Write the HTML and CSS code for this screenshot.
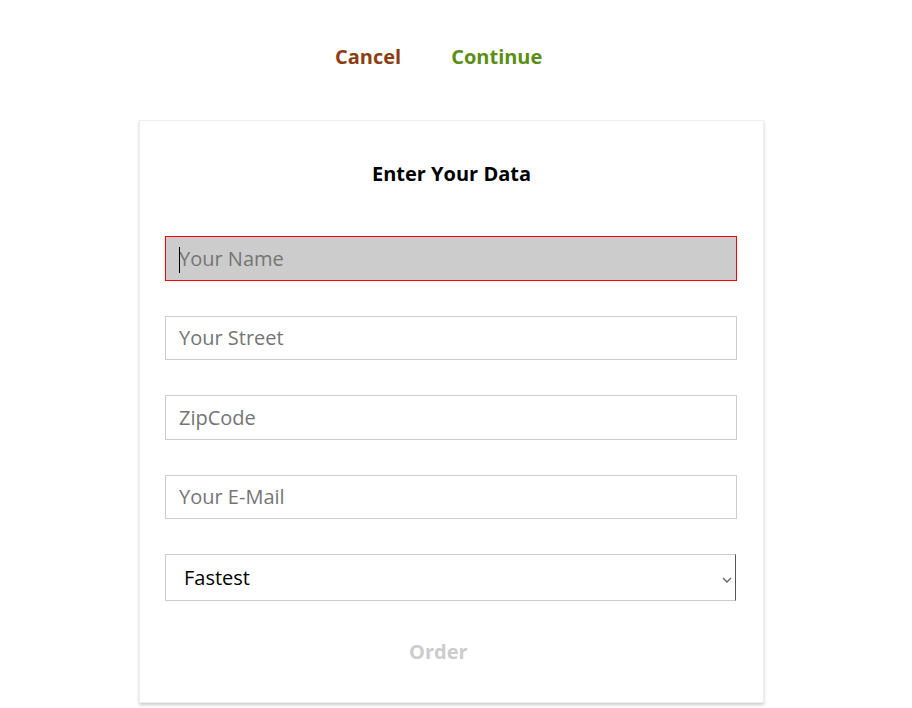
FILE: index.html
```html
<!DOCTYPE html>
<html>
<head>
<meta charset="utf-8">
<link rel="stylesheet" href="styles.css">
</head>
<body>
<div class="page">
  <div class="actions">
    <a class="cancel">Cancel</a>
    <a class="continue">Continue</a>
  </div>
  <form class="card">
    <h2 class="title">Enter Your Data</h2>
    <div class="wrap">
      <input class="field invalid" type="text" placeholder="Your Name">
      <span class="caret"></span>
    </div>
    <input class="field" type="text" placeholder="Your Street">
    <input class="field" type="text" placeholder="ZipCode">
    <input class="field" type="text" placeholder="Your E-Mail">
    <div class="wrap select-wrap">
      <select class="field select">
        <option>Fastest</option>
        <option>Cheapest</option>
      </select>
      <svg class="chev" width="10" height="6" viewBox="0 0 10 6"><path d="M1 1 L5 5 L9 1" fill="none" stroke="#666" stroke-width="1.4"/></svg>
    </div>
    <button class="order" type="button" disabled>Order</button>
  </form>
</div>
</body>
</html>
```

FILE: styles.css
```css
* { box-sizing: border-box; }
html, body { margin: 0; padding: 0; background: #fff; }
body { font-family: "Open Sans", "Liberation Sans", sans-serif; }
.page { width: 912px; height: 708px; overflow: hidden; }
.actions {
  display: flex;
  gap: 50px;
  padding-left: 335px;
  padding-top: 43px;
  height: 120px;
}
.actions a {
  font-size: 20px;
  font-weight: 700;
  line-height: 28px;
  cursor: pointer;
}
.cancel { color: #8d3c14; }
.continue { color: #5b8e14; }
.card {
  margin-left: 139px;
  width: 625px;
  height: 583px;
  border: 1px solid #eee;
  box-shadow: 0 2px 3px rgba(0,0,0,0.2);
  padding: 0 25px;
  display: flex;
  flex-direction: column;
}
.title {
  margin: 39px 0 0;
  text-align: center;
  font-size: 20px;
  font-weight: 700;
  line-height: 28px;
  color: #000;
  height: 28px;
}
.wrap { position: relative; width: 572px; }
.field {
  display: block;
  width: 572px;
  height: 44.5px;
  border: 1px solid #ccc;
  background: #fff;
  font-family: "Open Sans", "Liberation Sans", sans-serif;
  font-size: 20px;
  padding: 0 13px;
  margin-top: 35px;
  outline: none;
  color: #000;
}
.field::placeholder { color: #757575; }
.title + .wrap .field { margin-top: 48px; }
.field.invalid { border: 1px solid #ff0000; background: #ccc; }
.caret {
  position: absolute;
  left: 14px;
  bottom: 8px;
  width: 1px;
  height: 26px;
  background: #000;
}
.select {
  -webkit-appearance: none;
  appearance: none;
  height: 46.5px;
  padding: 0 18px;
  border-right: 1px solid #555;
  width: 571px;
}
.chev {
  position: absolute;
  right: 5px;
  bottom: 18px;
}
.order {
  align-self: flex-start;
  margin: 37px 0 0 244px;
  background: none;
  border: none;
  padding: 0;
  font-family: "Open Sans", "Liberation Sans", sans-serif;
  font-size: 20px;
  font-weight: 700;
  color: #ccc;
  line-height: 28px;
}
```
